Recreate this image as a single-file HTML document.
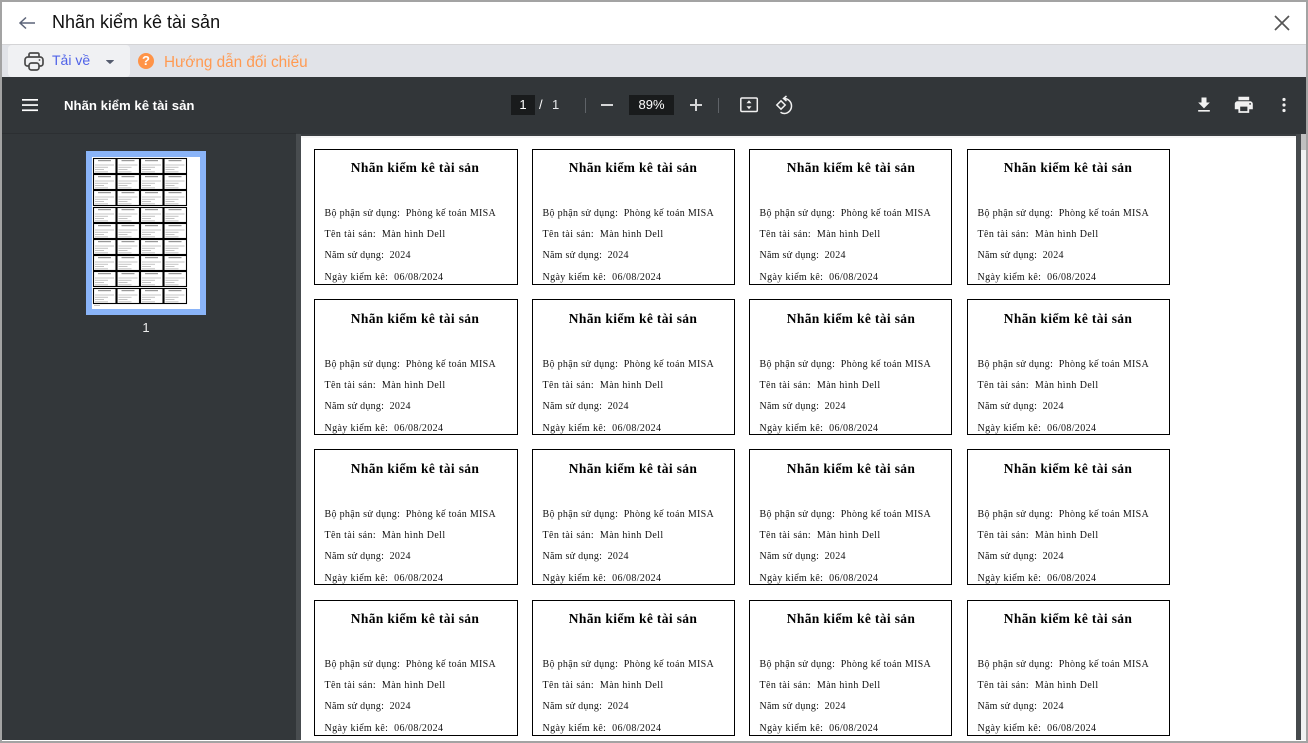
<!DOCTYPE html>
<html lang="vi">
<head>
<meta charset="utf-8">
<title>Nhãn kiểm kê tài sản</title>
<style>
html,body{margin:0;padding:0;width:1308px;height:743px;overflow:hidden;background:#a3a3a3}
*{box-sizing:border-box}
.a{position:absolute}
#app{position:absolute;left:2px;top:2px;width:1304px;height:739px;background:#fff;overflow:hidden}
body{font-family:"Liberation Sans",sans-serif;position:relative}
.c{position:absolute;width:204px;height:136px;border:1px solid #000;background:#fff;font-family:"Liberation Serif",serif;color:#111;overflow:hidden}
.c b{position:absolute;left:0;width:200px;top:10px;text-align:center;font-size:13.5px;line-height:16px;letter-spacing:.35px;color:#000;white-space:pre}
.c span{position:absolute;left:9.5px;font-size:10px;line-height:12px;letter-spacing:.31px;white-space:pre}
.c .l2{letter-spacing:.41px}.c .l3{letter-spacing:.26px}.c .l4{letter-spacing:.38px}
.l1{top:58px}.l2{top:79px}.l3{top:100px}.l4{top:122px}
.s b{top:11px}.s .l1{top:59px}.s .l2{top:80px}.s .l3{top:101px}.s .l4{top:123px}
.k2{width:203px}.k3{width:203px}.k4{width:203px}
.k3 b{left:1px}
</style>
</head>
<body>
<div id="app"></div>
<!-- header -->
<div class="a" style="left:2px;top:44px;width:1304px;height:1px;background:#d4d4d6"></div>
<svg class="a" style="left:17px;top:13px" width="20" height="20" viewBox="0 0 20 20" fill="none" stroke="#5c6478" stroke-width="1.5"><path d="M18 10H3M9 4.5 3 10l6 5.500"/></svg>
<div class="a" style="left:52px;top:11px;font-size:18px;line-height:22px;color:#111;white-space:pre">Nhãn kiểm kê tài sản</div>
<svg class="a" style="left:1272px;top:13px" width="20" height="20" viewBox="0 0 20 20" fill="none" stroke="#555" stroke-width="1.700"><path d="M3 3l14 14M17 3 3 17"/></svg>
<!-- sub toolbar -->
<div class="a" style="left:2px;top:45px;width:1304px;height:32px;background:#e1e3e8"></div>
<div class="a" style="left:8px;top:45px;width:122px;height:32px;background:#f0f1f3;border-radius:4px"></div>
<svg class="a" style="left:24px;top:51px" width="20" height="20" viewBox="0 0 20 20" fill="none" stroke="#4a4a4a" stroke-width="1.700"><path d="M5 6V3.500C5 2.500 5.800 2 6.500 2h7c.8 0 1.500.5 1.500 1.500V6"/><path d="M5 15H3.500C2 15 1 14 1 12.500V9c0-1.700 1.300-3 3-3h12c1.700 0 3 1.300 3 3v3.500c0 1.500-1 2.500-2.500 2.500H15"/><rect x="5" y="12" width="10" height="7" rx="2.500"/><circle cx="15.500" cy="9" r=".9" fill="#4a4a4a" stroke="none"/></svg>
<div class="a" style="left:52px;top:52px;font-size:14px;line-height:16px;color:#4f62e8;white-space:pre">Tải về</div>
<svg class="a" style="left:105px;top:59px" width="10" height="6" viewBox="0 0 10 6"><path d="M1.500 1h7c.4 0 .5.300.3.600L5.400 4.700c-.2.200-.6.200-.8 0L1.200 1.600C1 1.300 1.100 1 1.500 1z" fill="#555c6e"/></svg>
<div class="a" style="left:138px;top:53px;width:16px;height:16px;border-radius:50%;background:#ff9347;color:#fff;font-size:13px;font-weight:bold;line-height:16px;text-align:center">?</div>
<div class="a" style="left:164px;top:54px;font-size:15.300px;line-height:18px;color:#ff9a52;white-space:pre">Hướng dẫn đối chiếu</div>
<!-- pdf toolbar -->
<div class="a" style="left:2px;top:77px;width:1304px;height:57px;background:#323639"></div>
<svg class="a" style="left:22px;top:98px" width="16" height="14" viewBox="0 0 16 14" fill="#fff"><rect y="1" width="16" height="1.700"/><rect y="6.200" width="16" height="1.700"/><rect y="11.400" width="16" height="1.700"/></svg>
<div class="a" style="left:64px;top:98px;font-size:13.200px;line-height:16px;font-weight:bold;color:#fff;white-space:pre">Nhãn kiểm kê tài sản</div>
<div class="a" style="left:511px;top:95px;width:24px;height:20px;background:#191b1c;color:#fff;font-size:13px;line-height:20px;text-align:center">1</div>
<div class="a" style="left:539px;top:97px;font-size:13px;line-height:16px;color:#fff">/</div>
<div class="a" style="left:552px;top:97px;font-size:13px;line-height:16px;color:#e8eaed">1</div>
<div class="a" style="left:585px;top:98px;width:1px;height:15px;background:#5f6368"></div>
<div class="a" style="left:601px;top:104px;width:12px;height:2px;background:#d5d6d7"></div>
<div class="a" style="left:629px;top:95px;width:45px;height:20px;background:#191b1c;color:#fff;font-size:13px;line-height:20px;text-align:center">89%</div>
<svg class="a" style="left:689px;top:98px" width="14" height="14" viewBox="0 0 14 14" fill="#d5d6d7"><rect x="1" y="6" width="12" height="2"/><rect x="6" y="1" width="2" height="12"/></svg>
<div class="a" style="left:718px;top:98px;width:1px;height:15px;background:#5f6368"></div>
<svg class="a" style="left:739px;top:96px" width="20" height="18" viewBox="0 0 20 18" fill="none"><rect x="1.800" y="2" width="16.500" height="13.500" rx="1.200" stroke="#f1f1f1" stroke-width="1.500"/><path d="M10 4.300 12.500 7.300H7.500zM10 13.300 7.500 10.300h5z" fill="#f1f1f1"/></svg>
<svg class="a" style="left:775px;top:95px" width="20" height="20" viewBox="0 0 20 20" fill="none" stroke="#f1f1f1" stroke-width="1.500"><path d="M11.500 1 8.500 3.500l3 2.500"/><path d="M8.500 3.500a7.500 7.500 0 0 1 1 15 7.500 7.500 0 0 1-4-1.300"/><path d="M6 5.800 10.200 10 6 14.200 1.800 10z"/></svg>
<svg class="a" style="left:1194px;top:95px" width="20" height="20" viewBox="0 0 24 24" fill="#f1f1f1"><path d="M19 9h-4V3H9v6H5l7 7 7-7zM5 18v2h14v-2H5z"/></svg>
<svg class="a" style="left:1233px;top:94px" width="21.600" height="21.600" viewBox="0 0 24 24" fill="#f1f1f1"><path d="M19 8H5c-1.660 0-3 1.340-3 3v6h4v4h12v-4h4v-6c0-1.660-1.340-3-3-3zm-3 11H8v-5h8v5zm3-7c-.55 0-1-.45-1-1s.45-1 1-1 1 .45 1 1-.45 1-1 1zm-1-9H6v4h12V3z"/></svg>
<svg class="a" style="left:1281px;top:97px" width="6" height="16" viewBox="0 0 6 16" fill="#f1f1f1"><circle cx="3" cy="2.500" r="1.600"/><circle cx="3" cy="8" r="1.600"/><circle cx="3" cy="13.500" r="1.600"/></svg>
<!-- sidebar -->
<div class="a" style="left:2px;top:134px;width:294px;height:606px;background:#33373a"></div>
<div class="a" style="left:2px;top:133px;width:294px;height:1px;background:#2c2f32"></div>
<div class="a" style="left:296px;top:134px;width:5px;height:606px;background:#484c4f"></div>
<div class="a" style="left:301px;top:134px;width:995px;height:2px;background:#3a3e41"></div>
<div class="a" style="left:301px;top:136px;width:995px;height:2px;background:#f6f6f6"></div>
<!-- scrollbar -->
<div class="a" style="left:1296px;top:134px;width:5px;height:606px;background:#45494c"></div>
<div class="a" style="left:1301px;top:134px;width:5px;height:606px;background:#f0f1f1"></div>
<div class="a" style="left:1301px;top:134px;width:5px;height:16px;background:#c0c0c0"></div>
<div class="a" style="left:2px;top:740px;width:1304px;height:1px;background:#fff"></div>
<!-- thumbnail -->
<svg class="a" style="left:86px;top:151px" width="120" height="164" viewBox="0 0 120 164">
<defs>
<g id="t"><rect x=".5" y=".5" width="22.500" height="15" fill="#fff" stroke="#000" stroke-width="1.100"/><g fill="#c4c4c4"><rect x="5" y="2" width="13" height="1.200" fill="#999"/><rect x="2" y="6.500" width="19" height="1"/><rect x="2" y="8.800" width="13" height="1"/><rect x="2" y="11" width="9" height="1"/><rect x="2" y="13.300" width="13" height="1"/></g></g>
<g id="r"><use href="#t" x="7"/><use href="#t" x="30.500"/><use href="#t" x="54"/><use href="#t" x="77.500"/></g>
</defs>
<rect width="120" height="164" fill="#8ab4f8"/>
<rect x="6" y="6" width="108" height="152" fill="#fff"/>
<use href="#r" y="7"/><use href="#r" y="23"/><use href="#r" y="39"/><use href="#r" y="56"/><use href="#r" y="72"/><use href="#r" y="88"/><use href="#r" y="104"/><use href="#r" y="120"/><use href="#r" y="137"/>
<rect x="8" y="154" width="6" height="1" fill="#c4c4c4"/>
</svg>
<div class="a" style="left:140px;top:320px;width:12px;font-size:13px;line-height:15px;text-align:center;color:#eee">1</div>
<!-- cards -->
<div class="c" style="left:314px;top:149px"><b>Nhãn kiểm kê tài sản</b><span class="l1">Bộ phận sử dụng:  Phòng kế toán MISA</span><span class="l2">Tên tài sản:  Màn hình Dell</span><span class="l3">Năm sử dụng:  2024</span><span class="l4">Ngày kiểm kê:  06/08/2024</span></div>
<div class="c k2" style="left:532px;top:149px"><b>Nhãn kiểm kê tài sản</b><span class="l1">Bộ phận sử dụng:  Phòng kế toán MISA</span><span class="l2">Tên tài sản:  Màn hình Dell</span><span class="l3">Năm sử dụng:  2024</span><span class="l4">Ngày kiểm kê:  06/08/2024</span></div>
<div class="c k3" style="left:749px;top:149px"><b>Nhãn kiểm kê tài sản</b><span class="l1">Bộ phận sử dụng:  Phòng kế toán MISA</span><span class="l2">Tên tài sản:  Màn hình Dell</span><span class="l3">Năm sử dụng:  2024</span><span class="l4">Ngày kiểm kê:  06/08/2024</span></div>
<div class="c k4" style="left:967px;top:149px"><b>Nhãn kiểm kê tài sản</b><span class="l1">Bộ phận sử dụng:  Phòng kế toán MISA</span><span class="l2">Tên tài sản:  Màn hình Dell</span><span class="l3">Năm sử dụng:  2024</span><span class="l4">Ngày kiểm kê:  06/08/2024</span></div>
<div class="c s" style="left:314px;top:299px"><b>Nhãn kiểm kê tài sản</b><span class="l1">Bộ phận sử dụng:  Phòng kế toán MISA</span><span class="l2">Tên tài sản:  Màn hình Dell</span><span class="l3">Năm sử dụng:  2024</span><span class="l4">Ngày kiểm kê:  06/08/2024</span></div>
<div class="c s k2" style="left:532px;top:299px"><b>Nhãn kiểm kê tài sản</b><span class="l1">Bộ phận sử dụng:  Phòng kế toán MISA</span><span class="l2">Tên tài sản:  Màn hình Dell</span><span class="l3">Năm sử dụng:  2024</span><span class="l4">Ngày kiểm kê:  06/08/2024</span></div>
<div class="c s k3" style="left:749px;top:299px"><b>Nhãn kiểm kê tài sản</b><span class="l1">Bộ phận sử dụng:  Phòng kế toán MISA</span><span class="l2">Tên tài sản:  Màn hình Dell</span><span class="l3">Năm sử dụng:  2024</span><span class="l4">Ngày kiểm kê:  06/08/2024</span></div>
<div class="c s k4" style="left:967px;top:299px"><b>Nhãn kiểm kê tài sản</b><span class="l1">Bộ phận sử dụng:  Phòng kế toán MISA</span><span class="l2">Tên tài sản:  Màn hình Dell</span><span class="l3">Năm sử dụng:  2024</span><span class="l4">Ngày kiểm kê:  06/08/2024</span></div>
<div class="c s" style="left:314px;top:449px"><b>Nhãn kiểm kê tài sản</b><span class="l1">Bộ phận sử dụng:  Phòng kế toán MISA</span><span class="l2">Tên tài sản:  Màn hình Dell</span><span class="l3">Năm sử dụng:  2024</span><span class="l4">Ngày kiểm kê:  06/08/2024</span></div>
<div class="c s k2" style="left:532px;top:449px"><b>Nhãn kiểm kê tài sản</b><span class="l1">Bộ phận sử dụng:  Phòng kế toán MISA</span><span class="l2">Tên tài sản:  Màn hình Dell</span><span class="l3">Năm sử dụng:  2024</span><span class="l4">Ngày kiểm kê:  06/08/2024</span></div>
<div class="c s k3" style="left:749px;top:449px"><b>Nhãn kiểm kê tài sản</b><span class="l1">Bộ phận sử dụng:  Phòng kế toán MISA</span><span class="l2">Tên tài sản:  Màn hình Dell</span><span class="l3">Năm sử dụng:  2024</span><span class="l4">Ngày kiểm kê:  06/08/2024</span></div>
<div class="c s k4" style="left:967px;top:449px"><b>Nhãn kiểm kê tài sản</b><span class="l1">Bộ phận sử dụng:  Phòng kế toán MISA</span><span class="l2">Tên tài sản:  Màn hình Dell</span><span class="l3">Năm sử dụng:  2024</span><span class="l4">Ngày kiểm kê:  06/08/2024</span></div>
<div class="c" style="left:314px;top:600px"><b>Nhãn kiểm kê tài sản</b><span class="l1">Bộ phận sử dụng:  Phòng kế toán MISA</span><span class="l2">Tên tài sản:  Màn hình Dell</span><span class="l3">Năm sử dụng:  2024</span><span class="l4">Ngày kiểm kê:  06/08/2024</span></div>
<div class="c k2" style="left:532px;top:600px"><b>Nhãn kiểm kê tài sản</b><span class="l1">Bộ phận sử dụng:  Phòng kế toán MISA</span><span class="l2">Tên tài sản:  Màn hình Dell</span><span class="l3">Năm sử dụng:  2024</span><span class="l4">Ngày kiểm kê:  06/08/2024</span></div>
<div class="c k3" style="left:749px;top:600px"><b>Nhãn kiểm kê tài sản</b><span class="l1">Bộ phận sử dụng:  Phòng kế toán MISA</span><span class="l2">Tên tài sản:  Màn hình Dell</span><span class="l3">Năm sử dụng:  2024</span><span class="l4">Ngày kiểm kê:  06/08/2024</span></div>
<div class="c k4" style="left:967px;top:600px"><b>Nhãn kiểm kê tài sản</b><span class="l1">Bộ phận sử dụng:  Phòng kế toán MISA</span><span class="l2">Tên tài sản:  Màn hình Dell</span><span class="l3">Năm sử dụng:  2024</span><span class="l4">Ngày kiểm kê:  06/08/2024</span></div>
</body>
</html>
